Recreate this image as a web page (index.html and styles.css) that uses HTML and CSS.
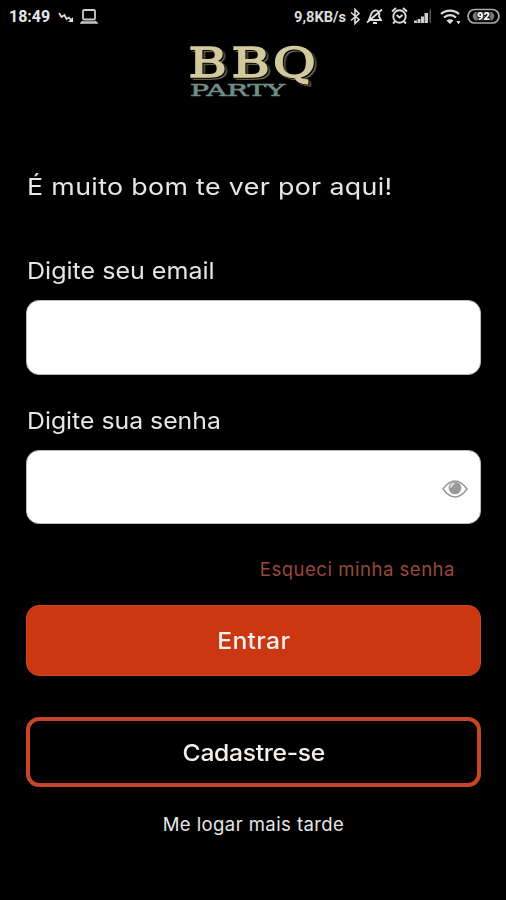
FILE: index.html
```html
<!DOCTYPE html>
<html lang="pt-BR">
<head>
<meta charset="utf-8">
<title>BBQ Party</title>
<link rel="stylesheet" href="styles.css">
</head>
<body>
<header class="status">
  <div class="status-left">
    <span class="clock">18:49</span>
    <svg width="16" height="12" viewBox="0 0 16 12" fill="none" stroke="#ddd" stroke-width="1.7"><path d="M1 2l2.500 4 3-2 2 4 2.500-1.500 2.500 3"/><path d="M15 6v5h-5z" fill="#ddd" stroke="none"/></svg>
    <svg class="laptop" width="18" height="15" viewBox="0 0 18 15" fill="none" stroke="#ccc"><rect x="3" y="1" width="12" height="9.500" rx="1.200" stroke-width="1.800"/><path d="M3 12L1 14h16l-2-2" fill="#999" stroke-width="1.300"/></svg>
  </div>
  <svg class="status-right" width="214" height="24" viewBox="0 0 214 24" fill="none" stroke="#ddd">
    <text class="rate" x="2" y="14.500" textLength="52" lengthAdjust="spacingAndGlyphs">9,8KB/s</text>
    <path d="M59 5.500l8 7-4 4v-14l4 4-8 7" stroke-width="1.600"/>
    <g stroke-width="1.800"><path d="M77 12.500c2-2 1-8 6-9 3-.5 5 2 4 6l2 3.500H77zM81 16h4M75 15.500L90 2.500"/></g>
    <g stroke-width="1.900"><circle cx="107.500" cy="9.500" r="6.200"/><path d="M104.500 8l3 2.500 3-2.500M100 4.500l4-3.500M115 4.500L111 1M103 14.500l-2 2M112 14.500l2 2"/></g>
    <g fill="#ccc" stroke="none"><path d="M122 13.500h3V16h-3zM125.500 12h3v4h-3zM129 9.500h3V16h-3zM132.500 6h3.500v10h-3.500z"/><path d="M137.500 2.500h1.500V16h-1.500z" fill="#555"/></g>
    <g stroke-width="2.200"><path d="M149 7c5-4.500 13-4.500 18 0M152 10.500c3.500-3.200 8.500-3.200 12 0"/><path d="M154.500 13.500c2-1.800 5-1.800 7 0L158 17zM164.500 14h4l-2 3.500z" fill="#ddd" stroke="none"/></g>
    <rect x="176" y="2.500" width="31" height="13.500" rx="6.700" stroke="#aaa" stroke-width="1.700"/>
    <path d="M183 5h17q5 4.300 0 8.600h-17q-5-4.300 0-8.600z" fill="#777" stroke="none"/>
    <text class="battery" x="191.500" y="13.300" text-anchor="middle">92</text>
  </svg>
</header>
<main>
  <svg class="logo" width="140" height="60" viewBox="0 0 140 60" role="img" aria-label="BBQ Party">
    <text class="bbq" x="3.500 37.500 70" y="35" transform="scale(1.27 1)">BBQ</text>
    <text class="party" x="6" y="54" textLength="95" lengthAdjust="spacingAndGlyphs">PARTY</text>
  </svg>
  <h1><span>É muito bom te ver por aqui!</span></h1>
  <label class="email" for="email"><span>Digite seu email</span></label>
  <input class="field" id="email" type="email">
  <label class="senha" for="senha"><span>Digite sua senha</span></label>
  <div class="field password">
    <input id="senha" type="password">
    <svg width="26" height="18" viewBox="0 0 26 18"><path d="M1 9Q13-7 25 9Q13 25 1 9z" fill="none" stroke="#999" stroke-width="1.500"/><circle cx="13" cy="8" r="6.300" fill="#999"/><path d="M9 7.500q0-3.500 3.500-4" fill="none" stroke="#eee" stroke-width="1.600"/></svg>
  </div>
  <a class="forgot">Esqueci minha senha</a>
  <button class="enter"><span>Entrar</span></button>
  <button class="register"><span>Cadastre-se</span></button>
  <a class="later">Me logar mais tarde</a>
</main>
</body>
</html>
```
FILE: styles.css
```css
* { box-sizing: border-box; }
body {
  margin: 0;
  height: 900px;
  background: #000;
  color: #e6e6e6;
  font-family: Inter, "Open Sans", sans-serif;
  overflow: hidden;
}
.status {
  display: flex;
  justify-content: space-between;
  height: 34px;
  padding: 7px 0 0 9px;
  font-family: Roboto, sans-serif;
}
.status-left { display: flex; align-items: flex-start; }
.status-left svg { margin: 4px 0 0 8px; }
.status-left .laptop { margin: 2px 0 0 6px; }
.status-right { overflow: visible; flex: none; }
.clock { font-size: 16px; font-weight: 700; line-height: 20px; }
.rate { font-size: 15px; font-weight: 700; fill: #ddd; stroke: none; }
.battery { font-size: 11px; font-weight: 900; fill: #fff; stroke: #111; stroke-width: 2px; paint-order: stroke; }
main { display: flex; flex-direction: column; padding: 0 25px 0 26px; }
.logo { align-self: center; margin: 8px 0 0; overflow: visible; }
.bbq {
  font: 400 41px "DejaVu Serif", serif;
  fill: #d2c99d;
  stroke: #d2c99d;
  stroke-width: 1.6px;
  filter: drop-shadow(1.2px 1.4px 0 #000) drop-shadow(1.1px 1.3px 0 #77735c);
}
.party { font: 400 17.5px "DejaVu Serif", serif; fill: #6f8e87; stroke: #6f8e87; stroke-width: .6px; }
h1, label { font-size: 23.5px; font-weight: 400; line-height: 30px; padding-left: 1px; white-space: nowrap; }
h1 span, label span, button span { display: inline-block; transform-origin: left; }
h1 { margin: 70px 0 0; letter-spacing: .3px; }
h1 span { transform: scaleX(1.14); }
.email { margin-top: 54px; }
.senha { margin-top: 31px; }
label span { transform: scaleX(1.066); }
.senha span { transform: scaleX(1.055); }
.field { width: 455px; height: 75px; margin-top: 14px; border: 1px solid #bbb; border-radius: 13px; background: #fff; }
.password { display: flex; align-items: center; height: 74px; padding: 3px 12px 0 11px; }
.password input { flex: 1; min-width: 0; border: 0; background: none; }
.forgot { align-self: flex-end; margin: 33px 26px 0 0; font-size: 18.5px; line-height: 24px; letter-spacing: .53px; color: #98483a; }
button { height: 71px; padding: 0; border-radius: 13px; font: 500 23.5px/30px Inter, sans-serif; color: #f4f0ed; }
button span { transform-origin: center; transform: scaleX(1.05); }
.enter { margin-top: 24px; padding-top: 1px; border: 1px solid #cc4a28; background: #cb3710; letter-spacing: .3px; }
.register { height: 70px; margin-top: 41px; padding-top: 2px; border: 4px solid #c9452a; background: #000; letter-spacing: -.3px; }
.later { align-self: center; margin-top: 25px; font-size: 18.5px; line-height: 24px; letter-spacing: .43px; }
```
